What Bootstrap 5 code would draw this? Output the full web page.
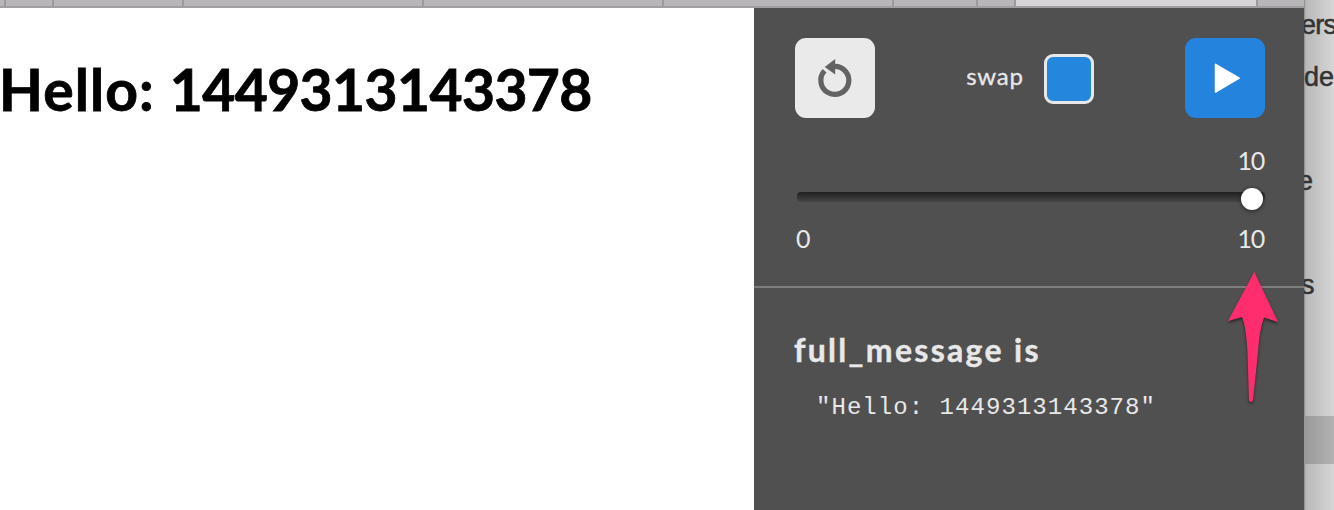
<!DOCTYPE html>
<html lang="en">
<head>
<meta charset="utf-8">
<meta name="viewport" content="width=device-width, initial-scale=1">
<title>Hello</title>
<link rel="stylesheet" href="https://cdn.jsdelivr.net/npm/bootstrap@5.3.0/dist/css/bootstrap.min.css">
<style>
body { background: #d2d2d2; color: #000; font-family: Lato, sans-serif; }
.app-window { width: 1304px; z-index: 1; }
.tab-strip { height: 8px; background: #b9b6ba; border-bottom: 2px solid #9fa09f; }
.tab-cell { flex: none; border-right: 2px solid #9c9a9d; }
.tab-cell.current { background: #d6d4d7; }
.greeting { margin: 49px 0 0 -1px; font: 700 57px/64px Lato, sans-serif; letter-spacing: -.6px; white-space: nowrap; -webkit-text-stroke: .8px #000; }
.greeting .word { letter-spacing: 1.1px; }
.side { width: 550px; flex: none; background: #505050; color: #e8e8e8; }
.controls { height: 280px; padding: 30px 39px 0 41px; border-bottom: 2px solid #7e7e7e; }
.tool { width: 80px; height: 80px; padding: 0; border: 0; border-radius: 11px; background: #eaeaea; }
.tool.play { background: #2383dd; }
.swap-group { gap: 20px; margin-top: 2px; }
.swap-label { font-size: 24px; line-height: 30px; letter-spacing: .8px; margin-top: -6px; -webkit-text-stroke: .3px #e8e8e8; }
.swap-box { width: 50px; height: 50px; border: 3px solid #e8e8e8; border-radius: 9px; background: #2586dd; }
.num { font-size: 25px; line-height: 30px; letter-spacing: -1.2px; }
.num-now { margin-top: 27px; padding-right: 1px; }
.num-range { margin: 21px 0 0 1px; padding-right: 1px; }
.track { height: 10px; margin: 17px 0 0 2px; border-radius: 4px; background: linear-gradient(#202020, #464646); }
.knob { width: 22px; height: 22px; top: -4px; right: 2px; background: #fff; box-shadow: 0 1px 4px #222; }
.inspect { padding: 41px 40px 0; }
.var-name { font-size: 32px; line-height: 42px; font-weight: 700; letter-spacing: 2.3px; white-space: nowrap; -webkit-text-stroke: .4px #e8e8e8; }
.var-value { margin: 22px 0 0 22px; font: 24px/30px "Liberation Mono", monospace; letter-spacing: 1.05px; white-space: pre; }
.behind { background: linear-gradient(90deg, #8c8c8c 0, #b9b9b9 2px, #d8d8d8 100%); color: #333; font: 27px/32px "Liberation Sans", sans-serif; -webkit-text-stroke: .5px #333; }
.behind > div { height: 32px; white-space: nowrap; }
.behind .band { height: 48px; margin-top: 115px; background: linear-gradient(90deg, #999, #b4b4b4); }
.pointer { left: 1220px; top: 264px; z-index: 2; filter: drop-shadow(0 2px 1.5px rgba(0,0,0,.5)); }
</style>
<script src="https://cdn.jsdelivr.net/npm/bootstrap@5.3.0/dist/js/bootstrap.bundle.min.js"></script>
</head>
<body class="vh-100 overflow-hidden position-relative d-flex">
<div class="app-window d-flex flex-column flex-shrink-0 position-relative">
  <div class="tab-strip d-flex flex-shrink-0">
    <div class="tab-cell" style="width:6px"></div>
    <div class="tab-cell" style="width:48px"></div>
    <div class="tab-cell" style="width:130px"></div>
    <div class="tab-cell" style="width:240px"></div>
    <div class="tab-cell" style="width:240px"></div>
    <div class="tab-cell" style="width:230px"></div>
    <div class="tab-cell" style="width:84px"></div>
    <div class="tab-cell" style="width:38px"></div>
    <div class="tab-cell current" style="width:242px"></div>
  </div>
  <div class="d-flex flex-grow-1">
    <main class="flex-grow-1 bg-white">
      <h1 class="greeting"><span class="word">Hello: </span>1449313143378</h1>
    </main>
    <aside class="side">
      <div class="controls">
        <div class="d-flex align-items-center justify-content-between">
          <button class="tool" aria-label="Reset">
            <svg class="d-block" width="80" height="80" viewBox="0 0 80 80"><path d="M29.6 32.8A14 14 0 1 0 39 28.4" fill="none" stroke="#636363" stroke-width="5.2"/><path d="M29.7 29 40.2 21V36.6Z" fill="#636363"/></svg>
          </button>
          <label class="d-flex align-items-center swap-group"><span class="swap-label">swap</span><span class="swap-box"></span></label>
          <button class="tool play" aria-label="Play">
            <svg class="d-block" width="80" height="80" viewBox="0 0 80 80"><path d="M30.5 26.3 54.2 40.1 30.5 54Z" fill="#fff" stroke="#fff" stroke-width="1.5" stroke-linejoin="round"/></svg>
          </button>
        </div>
        <div class="num num-now text-end">10</div>
        <div class="track position-relative"><span class="knob position-absolute rounded-circle"></span></div>
        <div class="num num-range d-flex justify-content-between"><span>0</span><span>10</span></div>
      </div>
      <div class="inspect">
        <div class="var-name">full_message is</div>
        <div class="var-value">"Hello: 1449313143378"</div>
      </div>
    </aside>
  </div>
</div>
<div class="behind flex-grow-1">
  <div style="margin-top:9px;margin-left:-3px;letter-spacing:-.7px">ers</div>
  <div style="margin-top:20px">de</div>
  <div style="margin-top:72px;margin-left:-6px">e</div>
  <div style="margin-top:72px;margin-left:-3px">s</div>
  <div class="band"></div>
</div>
<svg class="pointer position-absolute" width="66" height="145" viewBox="0 0 66 145"><path d="M34.3 8 58 58 44 53.5Q39.5 65 38 88L33 136Q31 140 29 136L27.5 88Q26 62 22 53L8 57Z" fill="#ff2d6d"/></svg>
</body>
</html>
